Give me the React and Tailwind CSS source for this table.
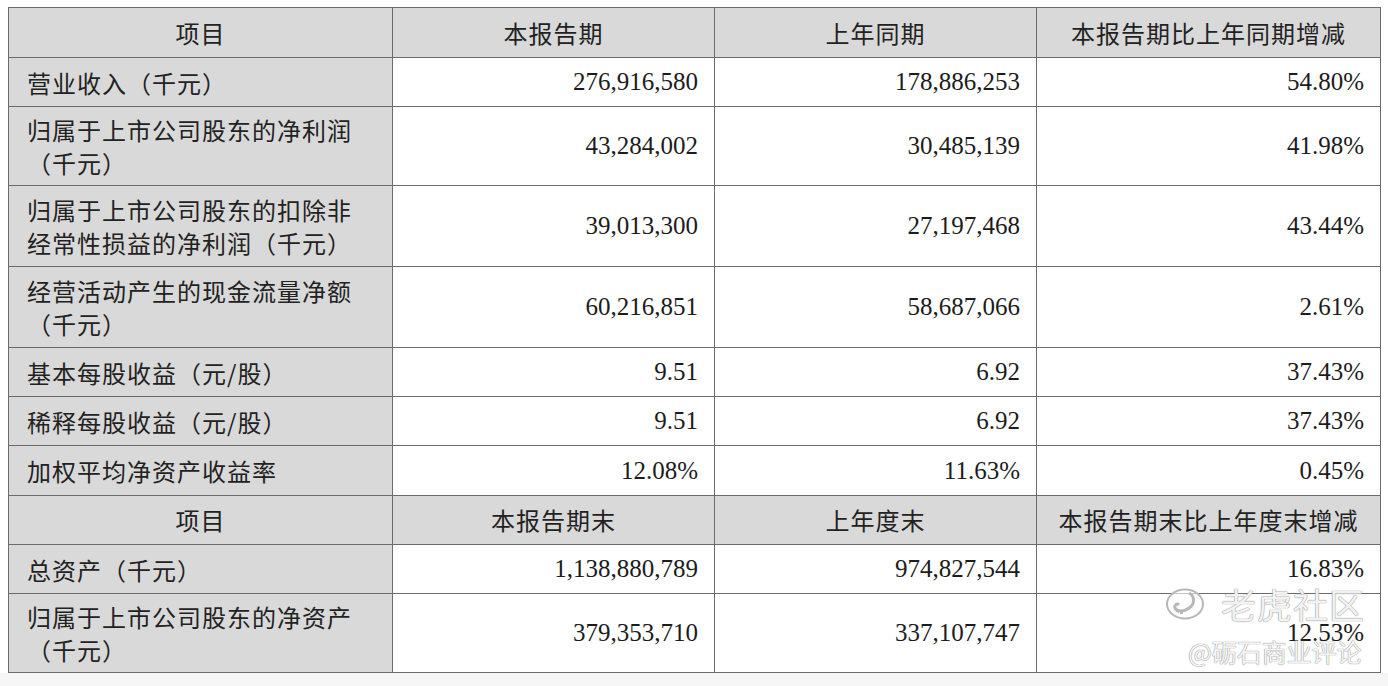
import React from "react";

const rows = [
  { label: ["营业收入（千元）"], a: "276,916,580", b: "178,886,253", c: "54.80%", h: "h-[49px]" },
  { label: ["归属于上市公司股东的净利润", "（千元）"], a: "43,284,002", b: "30,485,139", c: "41.98%", h: "h-[79px]" },
  { label: ["归属于上市公司股东的扣除非", "经常性损益的净利润（千元）"], a: "39,013,300", b: "27,197,468", c: "43.44%", h: "h-[81px]" },
  { label: ["经营活动产生的现金流量净额", "（千元）"], a: "60,216,851", b: "58,687,066", c: "2.61%", h: "h-[81px]" },
  { label: ["基本每股收益（元/股）"], a: "9.51", b: "6.92", c: "37.43%", h: "h-[49px]" },
  { label: ["稀释每股收益（元/股）"], a: "9.51", b: "6.92", c: "37.43%", h: "h-[49px]" },
  { label: ["加权平均净资产收益率"], a: "12.08%", b: "11.63%", c: "0.45%", h: "h-[50px]" },
];

const rows2 = [
  { label: ["总资产（千元）"], a: "1,138,880,789", b: "974,827,544", c: "16.83%", h: "h-[49px]" },
  { label: ["归属于上市公司股东的净资产", "（千元）"], a: "379,353,710", b: "337,107,747", c: "12.53%", h: "h-[79px]" },
];

const cjk = "font-['Noto_Sans_CJK_SC',sans-serif]";
const num = "font-['Liberation_Serif','Times_New_Roman',serif]";
const cell = "border border-[#6b6b6b] p-0";

const HeaderRow = ({ cols, h }) => (
  <tr className={h}>
    {cols.map((c, i) => (
      <td key={i} className={`${cell} bg-[#d9d9d9] text-center text-[24px] tracking-[1px] text-[#222] ${cjk}`}>
        {c}
      </td>
    ))}
  </tr>
);

const DataRow = ({ r }) => (
  <tr className={r.h}>
    <td className={`${cell} bg-[#d9d9d9] pl-[18px] text-[24px] leading-[33px] tracking-[1px] text-[#222] ${cjk}`}>
      {r.label.map((l, i) => (
        <div key={i}>{l}</div>
      ))}
    </td>
    {[r.a, r.b, r.c].map((v, i) => (
      <td key={i} className={`${cell} bg-white pr-[16px] text-right text-[25px] text-[#1c1c1c] ${num}`}>
        {v}
      </td>
    ))}
  </tr>
);

export default function App() {
  return (
    <div className="relative w-[1388px] h-[686px] bg-white overflow-hidden">
      <div className="pt-[7px] pl-[8px]">
        <table className="border-collapse table-fixed w-[1372px]">
          <colgroup>
            <col className="w-[384px]" />
            <col className="w-[322px]" />
            <col className="w-[322px]" />
            <col className="w-[344px]" />
          </colgroup>
          <tbody>
            <HeaderRow cols={["项目", "本报告期", "上年同期", "本报告期比上年同期增减"]} h="h-[50px]" />
            {rows.map((r, i) => (
              <DataRow key={i} r={r} />
            ))}
            <HeaderRow cols={["项目", "本报告期末", "上年度末", "本报告期末比上年度末增减"]} h="h-[49px]" />
            {rows2.map((r, i) => (
              <DataRow key={i} r={r} />
            ))}
          </tbody>
        </table>
      </div>
      <div className="absolute left-0 right-0 bottom-0 h-[13px] bg-[#f6f6f6]" />

      {/* watermark */}
      <div className="absolute left-[1165px] top-[586px] flex items-center gap-[16px] pointer-events-none">
        <svg width="40" height="32" viewBox="0 0 40 32" fill="none" stroke="#b8b8b8" strokeWidth="2">
          <ellipse cx="20" cy="16" rx="18" ry="14.5" fill="rgba(255,255,255,0.6)" />
          <path d="M24 5 C30 8 30 16 24 20 C19 24 12 24 10 20 C9 17 12 15 14 17" strokeWidth="3" />
          <path d="M11 23 L14 24 M15 25 L18 25" strokeWidth="2" />
        </svg>
        <span className={`text-[35px] leading-none tracking-[1px] text-[#f2f2f2] [text-shadow:0_0_1px_#8a8a8a,0_0_1px_#8a8a8a] ${cjk}`}>
          老虎社区
        </span>
      </div>
      <div
        className={`absolute left-[1188px] top-[639px] text-[25px] leading-none text-[#f4f4f4] [text-shadow:0_0_1px_#8f8f8f,0_0_1px_#8f8f8f] pointer-events-none ${cjk}`}
      >
        @砺石商业评论
      </div>
    </div>
  );
}
